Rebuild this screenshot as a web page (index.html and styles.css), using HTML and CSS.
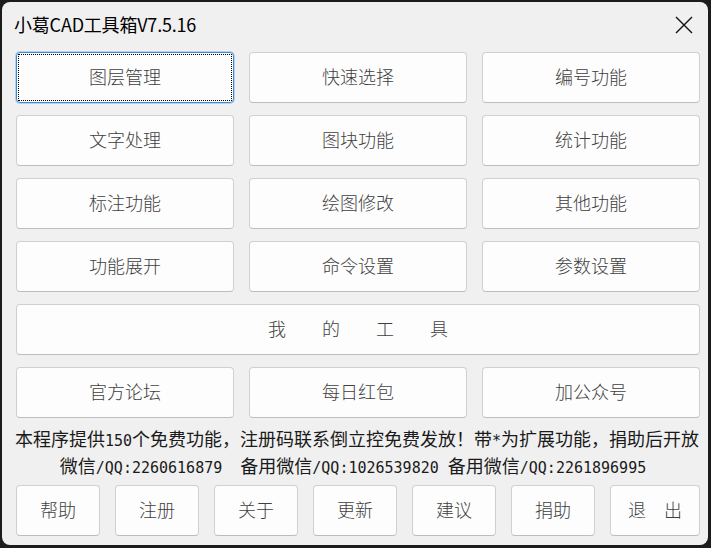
FILE: index.html
```html
<!DOCTYPE html>
<html lang="zh-CN">
<head>
<meta charset="utf-8">
<title>小葛CAD工具箱V7.5.16</title>
<link rel="stylesheet" href="styles.css">
</head>
<body>
<div class="window">
  <div class="titlebar">
    <span class="title">小葛CAD工具箱V7.5.16</span>
    <span class="close">
      <svg width="18" height="18" viewBox="0 0 18 18"><path d="M1 1 L17 17 M17 1 L1 17" stroke="#111" stroke-width="1.4" fill="none"/></svg>
    </span>
  </div>
  <div class="grid">
    <button class="btn focus">图层管理</button>
    <button class="btn">快速选择</button>
    <button class="btn">编号功能</button>
    <button class="btn">文字处理</button>
    <button class="btn">图块功能</button>
    <button class="btn">统计功能</button>
    <button class="btn">标注功能</button>
    <button class="btn">绘图修改</button>
    <button class="btn">其他功能</button>
    <button class="btn">功能展开</button>
    <button class="btn">命令设置</button>
    <button class="btn">参数设置</button>
    <button class="btn wide">我　　的　　工　　具</button>
    <button class="btn">官方论坛</button>
    <button class="btn">每日红包</button>
    <button class="btn">加公众号</button>
  </div>
  <div class="info">
    <div class="line first">本程序提供<span class="a">150</span>个免费功能，注册码联系倒立控免费发放！带<span class="a">*</span>为扩展功能，捐助后开放</div>
    <div class="line second">微信<span class="a">/QQ:2260616879  </span>备用微信<span class="a">/QQ:1026539820 </span>备用微信<span class="a">/QQ:2261896995</span></div>
  </div>
  <div class="bottom">
    <button class="btn small">帮助</button>
    <button class="btn small">注册</button>
    <button class="btn small">关于</button>
    <button class="btn small">更新</button>
    <button class="btn small">建议</button>
    <button class="btn small">捐助</button>
    <button class="btn small last">退　出</button>
  </div>
</div>
</body>
</html>
```
FILE: styles.css
```css
html, body {
  margin: 0;
  padding: 0;
  background: #1c1c1c;
  width: 711px;
  height: 548px;
  overflow: hidden;
}
.window {
  margin: 2px 0 0 2px;
  width: 706px;
  height: 543px;
  background: #f0f0f0;
  border-radius: 8px;
  box-sizing: border-box;
  font-family: "Noto Sans CJK SC", sans-serif;
}
.titlebar {
  height: 50px;
  display: flex;
  align-items: center;
  justify-content: space-between;
  padding: 0 15px 6px 12px;
  box-sizing: border-box;
}
.title {
  font-size: 18px;
  color: #000;
  letter-spacing: -0.2px;
}
.close {
  display: flex;
  margin-top: 2px;
}
.grid {
  display: grid;
  grid-template-columns: 218px 218px 218px;
  grid-auto-rows: 51px;
  column-gap: 15px;
  row-gap: 12px;
  padding-left: 14px;
}
.btn {
  position: relative;
  background: #fdfdfd;
  border: 1px solid #d0d0d0;
  border-bottom-color: #bdbdbd;
  border-radius: 4px;
  font-family: "Noto Sans CJK SC", sans-serif;
  font-size: 18px;
  font-weight: 300;
  color: #3f3f3f;
  padding: 0 0 3px 0;
  margin: 0;
  box-sizing: border-box;
}
.wide {
  grid-column: 1 / 4;
}
.focus {
  border: 1px solid #3f8bd0;
  box-shadow: 0 0 0 1px #b3d3ee;
}
.focus::after {
  content: "";
  position: absolute;
  inset: 1px;
  border: 1px dotted #000;
}
.info {
  margin-top: 7px;
  text-align: center;
  font-size: 18px;
  color: #1a1a1a;
}
.line {
  height: 27px;
  line-height: 27px;
  white-space: pre;
}
.first {
  padding-left: 4px;
}
.second {
  padding-right: 4px;
}
.a {
  font-family: "DejaVu Sans Mono", monospace;
  font-size: 15px;
}
.bottom {
  display: flex;
  gap: 15px;
  padding-left: 14px;
  margin-top: 6px;
}
.small {
  width: 84px;
  height: 51px;
}
.last {
  width: 90px;
}
```
